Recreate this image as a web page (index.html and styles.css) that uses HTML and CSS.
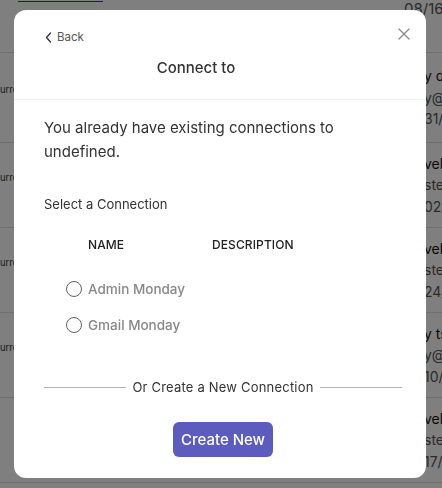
FILE: index.html
```html
<!DOCTYPE html>
<html>
<head>
<meta charset="utf-8">
<link rel="stylesheet" href="styles.css">
</head>
<body>
<div class="page">
  <div class="row row-top">
    <div class="cell-left"><span class="tab-line"></span></div>
    <div class="cell-right"><div class="l3 date-top">08/16/2024</div></div>
  </div>
  <div class="row row-first">
    <div class="cell-left"><span class="lt">urrent</span></div>
    <div class="cell-right"><div class="l1">y dev</div><div class="l2">y@gmail</div><div class="l3">31/07/2024</div></div>
  </div>
  <div class="row">
    <div class="cell-left"><span class="lt">urrent</span></div>
    <div class="cell-right"><div class="l1">velop</div><div class="l2">ster</div><div class="l3">02/08/2024</div></div>
  </div>
  <div class="row">
    <div class="cell-left"><span class="lt">urrent</span></div>
    <div class="cell-right"><div class="l1">velop</div><div class="l2">ster</div><div class="l3">24/08/2024</div></div>
  </div>
  <div class="row">
    <div class="cell-left"><span class="lt">urrent</span></div>
    <div class="cell-right"><div class="l1">y tsk</div><div class="l2">y@gmail</div><div class="l3">10/08/2024</div></div>
  </div>
  <div class="row">
    <div class="cell-left"></div>
    <div class="cell-right"><div class="l1">velop</div><div class="l2">ster</div><div class="l3">17/08/2024</div></div>
  </div>
</div>

<div class="overlay">
  <div class="modal">
    <div class="modal-header">
      <div class="header-top">
        <button class="back">
          <svg class="chev" width="7" height="11" viewBox="0 0 7 11"><path d="M5.5 1 L1.5 5.5 L5.5 10" fill="none" stroke="#333" stroke-width="1.3" stroke-linecap="round" stroke-linejoin="round"/></svg>
          <span>Back</span>
        </button>
        <button class="close">
          <svg width="12" height="12" viewBox="0 0 12 12"><path d="M1 1 L11 11 M11 1 L1 11" stroke="#8a8a8a" stroke-width="1.3" stroke-linecap="round"/></svg>
        </button>
      </div>
      <div class="title">Connect to</div>
    </div>
    <div class="modal-body">
      <p class="intro">You already have existing connections to undefined.</p>
      <div class="select-label">Select a Connection</div>
      <div class="table">
        <div class="thead">
          <span></span>
          <span class="th">NAME</span>
          <span class="th">DESCRIPTION</span>
        </div>
        <label class="trow">
          <span class="radio"></span>
          <span class="name">Admin Monday</span>
          <span></span>
        </label>
        <label class="trow">
          <span class="radio"></span>
          <span class="name">Gmail Monday</span>
          <span></span>
        </label>
      </div>
      <div class="or-divider"><span class="line"></span><span class="or-text">Or Create a New Connection</span><span class="line"></span></div>
      <div class="actions"><button class="create">Create New</button></div>
    </div>
  </div>
</div>
</body>
</html>
```

FILE: styles.css
```css
* { box-sizing: border-box; }
html, body { margin: 0; padding: 0; }
body {
  width: 442px;
  height: 488px;
  overflow: hidden;
  font-family: Inter, "Noto Sans", sans-serif;
  background: #fff;
  color: #222;
}
.page {
  display: flex;
  flex-direction: column;
  width: 442px;
  overflow: hidden;
}
.row {
  display: flex;
  flex: none;
  height: 85px;
  border-bottom: 1px solid #ddd;
  align-items: center;
}
.row-top {
  height: 53px;
  align-items: flex-start;
}
.row-first { height: 90px; }
.cell-left {
  width: 424px;
  flex: none;
  font-size: 9.5px;
  color: #333;
  padding-bottom: 16px;
}
.row-top .cell-left { width: 404px; padding: 1px 0 0 18px; }
.tab-line {
  display: block;
  width: 85px;
  height: 1px;
  background: #3a3aa8;
}
.cell-right {
  flex: none;
  white-space: nowrap;
  font-size: 14px;
  line-height: 21.5px;
}
.l1 { color: #111; }
.l2, .l3 { color: #555; }
.date-top { margin-top: -2px; font-size: 15px; }

.overlay {
  position: fixed;
  inset: 0;
  background: rgba(0, 0, 0, 0.5);
  padding: 10px 16px 10px 14px;
  display: flex;
  align-items: flex-start;
}
.modal {
  width: 412px;
  height: 468px;
  background: #fff;
  border-radius: 12px;
  display: flex;
  flex-direction: column;
}
.modal-header {
  padding: 18px 16px 21px 30px;
  border-bottom: 1px solid #f1f1f1;
}
.header-top {
  display: flex;
  justify-content: space-between;
  align-items: flex-start;
}
button {
  font-family: inherit;
  border: 0;
  background: none;
  padding: 0;
  margin: 0;
  cursor: pointer;
}
.back {
  display: flex;
  align-items: center;
  gap: 5px;
  margin-top: 1px;
  height: 16px;
  font-size: 11.5px;
  color: #555;
  line-height: 16px;
}
.chev { margin-left: 1px; }
.close {
  width: 12px;
  height: 12px;
  display: block;
}
.close svg { display: block; }
.title {
  margin-top: 13px;
  padding-right: 62px;
  text-align: center;
  font-size: 15px;
  line-height: 20px;
  font-weight: 500;
  color: #333;
}
.modal-body {
  padding: 16px 24px 21px 30px;
  display: flex;
  flex-direction: column;
}
.intro {
  margin: 0;
  font-size: 15px;
  line-height: 24px;
  color: #333;
  padding-right: 40px;
}
.select-label {
  margin-top: 30px;
  font-size: 13px;
  line-height: 20px;
  color: #333;
}
.table {
  margin-top: 22px;
}
.thead, .trow {
  display: grid;
  grid-template-columns: 44px 124px 1fr;
  align-items: center;
}
.thead {
  height: 16px;
  margin-bottom: 19px;
}
.th {
  font-size: 12px;
  font-weight: 500;
  color: #222;
  letter-spacing: 0.1px;
}
.trow {
  height: 36px;
}
.radio {
  justify-self: end;
  margin-right: 6px;
  width: 16px;
  height: 16px;
  border: 1.5px solid #606060;
  border-radius: 50%;
}
.name {
  font-size: 13.5px;
  font-weight: 500;
  color: #888;
}
.or-divider {
  margin-top: 34px;
  height: 20px;
  display: flex;
  align-items: center;
  gap: 6px;
}
.line {
  flex: 1;
  height: 1px;
  background: #b0b0b0;
}
.or-text {
  font-size: 13px;
  color: #333;
  letter-spacing: 0.2px;
}
.actions {
  margin-top: 25px;
  display: flex;
  justify-content: center;
}
.create {
  width: 100px;
  height: 35px;
  border-radius: 6px;
  background: #5c5cbf;
  color: #fff;
  font-size: 15px;
  font-weight: 500;
}
```
